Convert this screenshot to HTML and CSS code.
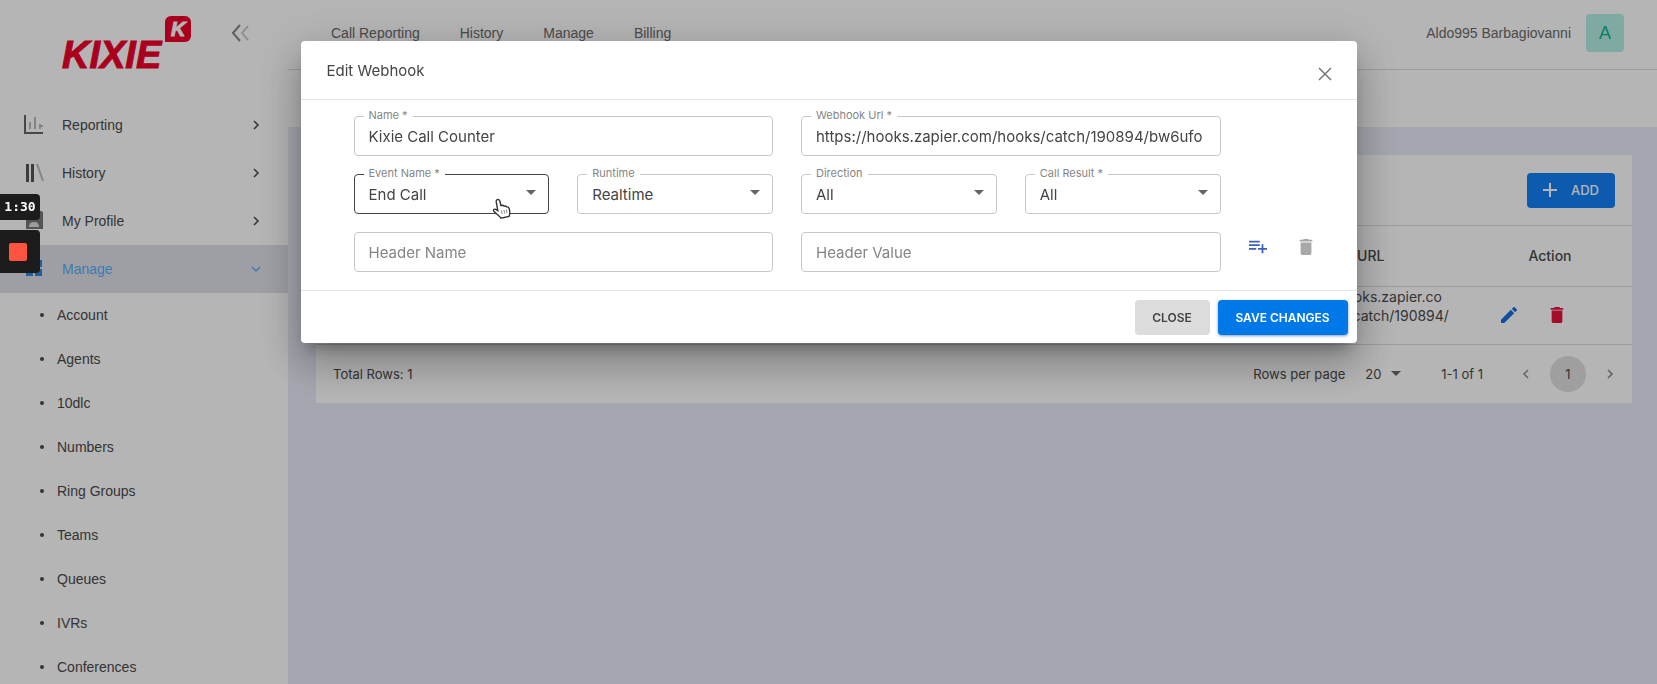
FILE: index.html
```html
<!DOCTYPE html>
<html lang="en">
<head>
  <meta charset="utf-8">
  <title>Kixie - Webhooks</title>
  <link rel="stylesheet" href="styles.css">
</head>
<body>
  <div class="app">
    <aside class="sidebar">
      <div class="brand">
        <a href="#" class="logo"><span class="logo-text">KIXIE</span><span class="logo-badge">K</span></a>
        <button class="icon-btn collapse" aria-label="Collapse menu">
          <svg width="18" height="18" viewBox="0 0 18 18" fill="none" stroke="#888" stroke-width="2"><path d="M8 1L1 9l7 8"/><path d="M16 2l-6 7 6 7" stroke="#ccc"/></svg>
        </button>
      </div>
      <nav>
        <a href="#" class="menu-item">
          <svg class="menu-icon" viewBox="0 0 20 20" fill="none"><path d="M1 0v18h18" stroke="#666" stroke-width="2"/><path d="M6 7v7M11 2v12M16 9v5" stroke="#bbb" stroke-width="2"/><path d="M15 11h4" stroke="#bbb" stroke-width="2"/></svg>
          <span>Reporting</span>
          <svg class="chevron" viewBox="0 0 10 10"><path d="M3 1l4 4-4 4"/></svg>
        </a>
        <a href="#" class="menu-item">
          <svg class="menu-icon" viewBox="0 0 20 20" fill="none"><path d="M3.500 1v18M8.500 1v18" stroke="#555" stroke-width="3"/><path d="M13 1l6 17" stroke="#bbb" stroke-width="2"/></svg>
          <span>History</span>
          <svg class="chevron" viewBox="0 0 10 10"><path d="M3 1l4 4-4 4"/></svg>
        </a>
        <a href="#" class="menu-item">
          <svg class="menu-icon" viewBox="0 0 20 20"><path d="M2 0h15a2 2 0 0 1 2 2v16H2z" fill="#777"/><path d="M5 16q0-5 5-5t5 5z" fill="#ddd"/></svg>
          <span>My Profile</span>
          <svg class="chevron" viewBox="0 0 10 10"><path d="M3 1l4 4-4 4"/></svg>
        </a>
        <a href="#" class="menu-item active">
          <svg class="menu-icon" viewBox="0 0 20 20"><path d="M2 1h7v7H2zM11 1h7v7h-7zM2 10h7v7H2zM11 10h7v7h-7z" fill="#2f86de"/></svg>
          <span>Manage</span>
          <svg class="chevron" viewBox="0 0 10 10"><path d="M1 3l4 4 4-4"/></svg>
        </a>
        <ul class="submenu">
          <li><a href="#">Account</a></li>
          <li><a href="#">Agents</a></li>
          <li><a href="#">10dlc</a></li>
          <li><a href="#">Numbers</a></li>
          <li><a href="#">Ring Groups</a></li>
          <li><a href="#">Teams</a></li>
          <li><a href="#">Queues</a></li>
          <li><a href="#">IVRs</a></li>
          <li><a href="#">Conferences</a></li>
        </ul>
      </nav>
    </aside>

    <div class="main">
      <header class="topbar">
        <nav class="top-links">
          <a href="#">Call Reporting</a>
          <a href="#">History</a>
          <a href="#">Manage</a>
          <a href="#">Billing</a>
        </nav>
        <div class="user"><span>Aldo995 Barbagiovanni</span><span class="avatar">A</span></div>
      </header>
      <div class="subbar"></div>

      <section class="card">
        <div class="card-toolbar">
          <button class="btn btn-add">
            <svg width="14" height="14" viewBox="0 0 14 14" fill="none" stroke="#fff" stroke-width="2"><path d="M7 0v14M0 7h14"/></svg>
            ADD
          </button>
        </div>
        <table class="hooks">
          <thead>
            <tr><th></th><th class="col-url">Webhook URL</th><th class="col-action">Action</th></tr>
          </thead>
          <tbody>
            <tr>
              <td></td>
              <td class="col-url">https://hooks.zapier.co<br>m/hooks/catch/190894/<br>bw6ufo/</td>
              <td class="col-action">
                <div class="row-actions">
                  <button class="icon-btn" aria-label="Edit">
                    <svg width="16" height="16" viewBox="3 3 18 18" fill="#1a6fe0"><path d="M3 17.250V21h3.750L17.810 9.940l-3.750-3.750L3 17.250zM20.710 7.040a1 1 0 0 0 0-1.410l-2.340-2.340a1 1 0 0 0-1.410 0l-1.830 1.830 3.750 3.750 1.830-1.830z"/></svg>
                  </button>
                  <button class="icon-btn" aria-label="Delete">
                    <svg width="16" height="16" viewBox="3 3 18 18" fill="#e8103c"><path d="M6 19c0 1.100.9 2 2 2h8c1.100 0 2-.9 2-2V7H6v12zM19 4h-3.500l-1-1h-5l-1 1H5v2h14V4z"/></svg>
                  </button>
                </div>
              </td>
            </tr>
          </tbody>
        </table>
        <div class="card-footer">
          <span>Total Rows: 1</span>
          <div class="pager">
            <label for="rows">Rows per page</label>
            <div class="rows-select">
              <select id="rows"><option>20</option></select>
              <svg class="caret" viewBox="0 0 10 5"><path d="M0 0h10L5 5z"/></svg>
            </div>
            <span class="range">1-1 of 1</span>
            <button class="icon-btn page-arrow" aria-label="Previous page"><svg class="chevron" viewBox="0 0 10 10"><path d="M7 1L3 5l4 4"/></svg></button>
            <button class="page-num">1</button>
            <button class="icon-btn page-arrow" aria-label="Next page"><svg class="chevron" viewBox="0 0 10 10"><path d="M3 1l4 4-4 4"/></svg></button>
          </div>
        </div>
      </section>
    </div>
  </div>

  <div class="backdrop">
    <form class="modal" role="dialog" aria-labelledby="modalTitle">
      <div class="modal-header">
        <h2 id="modalTitle">Edit Webhook</h2>
        <button type="button" class="icon-btn modal-x" aria-label="Close">
          <svg width="14" height="14" viewBox="0 0 14 14" fill="none" stroke="#777" stroke-width="1.500"><path d="M1 1l12 12M13 1L1 13"/></svg>
        </button>
      </div>
      <div class="modal-body">
        <div class="field wide">
          <input type="text" id="hookName" value="Kixie Call Counter">
          <label for="hookName">Name *</label>
        </div>
        <div class="field wide">
          <input type="text" id="hookUrl" value="https://hooks.zapier.com/hooks/catch/190894/bw6ufo">
          <label for="hookUrl">Webhook Url *</label>
        </div>
        <div class="field hover new-row">
          <select id="eventName"><option>End Call</option></select>
          <label for="eventName">Event Name *</label>
          <svg class="caret" viewBox="0 0 10 5"><path d="M0 0h10L5 5z"/></svg>
          <svg class="pointer" viewBox="0 0 20 22"><path d="M6 1.500c1.200 0 1.800.8 2 2l.8 4 1.400-.3c1 0 1.500.4 1.900.9 1.300-.4 2 .1 2.500.8 1.600-.3 2.300.5 2.600 1.700l.6 3.400c.3 1.800-.2 3-.8 4.500l-8 1.700c-1.200-2-2.800-3-4.500-4.500l-2.700-2.500c-1-1.200.4-2.500 2-1.800l2 1.200L4.200 3.600c-.2-1.200.6-2.100 1.800-2.100z" fill="#fff" stroke="#333" stroke-width="1.400"/><path d="M9.500 12.500l.6 3.500M12 12l.6 3.500M14.300 11.500l.6 3.500" stroke="#888"/></svg>
        </div>
        <div class="field">
          <select id="runtime"><option>Realtime</option></select>
          <label for="runtime">Runtime</label>
          <svg class="caret" viewBox="0 0 10 5"><path d="M0 0h10L5 5z"/></svg>
        </div>
        <div class="field">
          <select id="direction"><option>All</option></select>
          <label for="direction">Direction</label>
          <svg class="caret" viewBox="0 0 10 5"><path d="M0 0h10L5 5z"/></svg>
        </div>
        <div class="field">
          <select id="callResult"><option>All</option></select>
          <label for="callResult">Call Result *</label>
          <svg class="caret" viewBox="0 0 10 5"><path d="M0 0h10L5 5z"/></svg>
        </div>
        <div class="field wide new-row">
          <input type="text" placeholder="Header Name" aria-label="Header Name">
        </div>
        <div class="field wide">
          <input type="text" placeholder="Header Value" aria-label="Header Value">
        </div>
        <div class="header-actions">
          <button type="button" class="icon-btn" aria-label="Add header">
            <svg width="18" height="18" viewBox="2 3 20 20" fill="#3a62b8"><path d="M14 10H2v2h12v-2zm0-4H2v2h12V6zm4 8v-4h-2v4h-4v2h4v4h2v-4h4v-2h-4zM2 16h8v-2H2v2z"/></svg>
          </button>
          <button type="button" class="icon-btn" aria-label="Remove header">
            <svg width="18" height="18" viewBox="2 2 20 20" fill="#a8a8a8"><path d="M6 19c0 1.100.9 2 2 2h8c1.100 0 2-.9 2-2V7H6v12zM19 4h-3.500l-1-1h-5l-1 1H5v2h14V4z"/></svg>
          </button>
        </div>
      </div>
      <div class="modal-footer">
        <button type="button" class="btn btn-close">CLOSE</button>
        <button type="button" class="btn btn-save">SAVE CHANGES</button>
      </div>
    </form>
  </div>

  <!-- screen recorder -->
  <div class="recorder">
    <div class="rec-time">1:30</div>
    <button class="rec-stop" aria-label="Stop recording"><span></span></button>
  </div>
</body>
</html>
```
FILE: styles.css
```css
:root {
    --line: #dcdcdc;
    --text: #4a4a4a;
    --blue: #0078e7;
    --ui: Inter, "Open Sans", sans-serif;
}

* { box-sizing: border-box; }

body {
    margin: 0;
    font-family: "Liberation Sans", Arial, sans-serif;
    font-size: 14px;
    color: var(--text);
    background: #e9ecf8;
}

a { color: inherit; text-decoration: none; }

button, input, select { font-family: var(--ui); color: inherit; }

.app {
    display: flex;
    height: 100vh;
    overflow: hidden;
}

/* sidebar */
.sidebar {
    width: 288px;
    flex-shrink: 0;
    background: #fff;
}

.brand {
    display: flex;
    justify-content: space-between;
    align-items: flex-start;
    height: 101px;
    padding: 16px 38px 0 62px;
}

.logo {
    display: flex;
    font-weight: bold;
    font-style: italic;
    color: #f0002a;
}

.logo-text {
    font-size: 38px;
    line-height: 38px;
    padding-top: 20px;
    -webkit-text-stroke: 1px #f0002a;
}

.logo-badge {
    width: 26px;
    height: 26px;
    margin-left: 4px;
    border-radius: 6px 6px 6px 0;
    background: #f0002a;
    color: #fff;
    font-size: 20px;
    line-height: 26px;
    text-align: center;
    -webkit-text-stroke: 1px #fff;
}

.icon-btn {
    display: flex;
    padding: 0;
    border: none;
    background: none;
    cursor: pointer;
}

.collapse { margin-top: 8px; }

.menu-item {
    display: flex;
    align-items: center;
    height: 48px;
    padding: 0 27px 0 24px;
}

.menu-item span { flex-grow: 1; }

.menu-item.active {
    color: #55acff;
    background: #dfe1e7;
}

.menu-icon {
    width: 20px;
    height: 20px;
    margin-right: 18px;
}

.chevron {
    width: 10px;
    height: 10px;
    fill: none;
    stroke: currentColor;
    stroke-width: 1.5;
}

.submenu {
    margin: 0;
    padding: 0;
    list-style: none;
}

.submenu a {
    display: flex;
    align-items: center;
    height: 44px;
    padding-left: 40px;
}

.submenu a::before {
    content: "";
    width: 4px;
    height: 4px;
    margin-right: 13px;
    border-radius: 50%;
    background: var(--text);
}

/* main area */
.main {
    flex-grow: 1;
    min-width: 0;
}

.topbar {
    display: flex;
    justify-content: space-between;
    align-items: center;
    height: 70px;
    padding: 0 33px 4px 43px;
    background: #fff;
    border-bottom: 1px solid var(--line);
}

.top-links { display: flex; gap: 40px; }

.top-links, .user { color: #6a6a6a; }

.user {
    display: flex;
    align-items: center;
    gap: 15px;
}

.avatar {
    width: 38px;
    line-height: 38px;
    border-radius: 4px;
    background: #b4f0e6;
    color: #10b090;
    font-size: 18px;
    text-align: center;
}

.subbar {
    height: 57px;
    background: #fff;
}

.card {
    margin: 28px 25px 0 28px;
    background: #fff;
    font-family: var(--ui);
}

.card-toolbar {
    display: flex;
    justify-content: flex-end;
    align-items: center;
    height: 71px;
    padding-right: 17px;
    border-bottom: 1px solid var(--line);
}

.btn {
    display: flex;
    align-items: center;
    justify-content: center;
    height: 35px;
    border: none;
    border-radius: 4px;
    font-size: 12px;
    font-weight: 600;
    cursor: pointer;
}

.btn-add {
    gap: 14px;
    width: 88px;
    background: #1280f6;
    color: #fff;
    font-size: 13px;
    font-weight: 500;
}

.hooks {
    width: 100%;
    table-layout: fixed;
    border-collapse: collapse;
    text-align: left;
}

.hooks th, .hooks td {
    padding: 0 0 0 16px;
    border-bottom: 1px solid var(--line);
    line-height: 19px;
}

.hooks th {
    height: 60px;
    font-weight: 500;
}

.hooks .col-url { width: 194px; }

.hooks .col-action {
    width: 164px;
    padding: 0;
    text-align: center;
}

.row-actions {
    display: flex;
    justify-content: center;
    gap: 32px;
    padding-right: 34px;
}

.card-footer {
    display: flex;
    justify-content: space-between;
    align-items: center;
    height: 58px;
    padding: 0 17px;
    font-size: 13px;
}

.pager { display: flex; align-items: center; }

.rows-select {
    position: relative;
    margin: 0 40px 0 20px;
}

.rows-select select {
    width: 36px;
    padding: 0;
    border: none;
    background: none;
    appearance: none;
    font-size: 13px;
}

.caret {
    position: absolute;
    right: 13px;
    top: 16px;
    width: 10px;
    height: 5px;
    fill: #666;
    pointer-events: none;
}

.rows-select .caret { right: 0; top: 5px; }

.range { margin-right: 38px; }

.page-arrow { color: #888; }

.page-num {
    width: 36px;
    height: 36px;
    margin: 0 19px;
    border: none;
    border-radius: 50%;
    background: #e0e0e0;
    font-size: 13px;
}

/* modal */
.backdrop {
    position: fixed;
    inset: 0;
    padding: 41px 32px;
    background: rgba(0, 0, 0, .29);
}

.modal {
    max-width: 1056px;
    margin: 0 auto;
    border-radius: 4px;
    background: #fff;
    color: #444;
    font-family: var(--ui);
    box-shadow: 0 11px 15px -7px rgba(0, 0, 0, .3), 0 24px 38px 3px rgba(0, 0, 0, .16), 0 9px 46px 8px rgba(0, 0, 0, .14);
}

.modal-header {
    display: flex;
    justify-content: space-between;
    align-items: center;
    height: 59px;
    padding: 0 25px 0 26px;
    border-bottom: 1px solid #e4e4e4;
}

.modal-header h2 {
    margin: 0;
    font-size: 15px;
    font-weight: 400;
}

.modal-x { padding-top: 8px; }

.modal-body {
    display: grid;
    grid-template-columns: repeat(4, 1fr) 66px;
    gap: 18px 28px;
    padding: 16px 42px 18px 53px;
}

.wide { grid-column: span 2; }

.field { position: relative; }

.new-row { grid-column-start: 1; }

.new-row.wide { grid-column: 1 / span 2; }

.field input, .field select {
    display: block;
    width: 100%;
    height: 40px;
    padding: 0 14px;
    border: 1px solid #c8c8c8;
    border-radius: 4px;
    background: #fff;
    appearance: none;
    font-size: 15px;
}

.field.hover select { border-color: #444; }

.field input::placeholder { color: #858585; opacity: 1; }

.field label {
    position: absolute;
    left: 10px;
    top: -8px;
    padding: 0 5px;
    background: #fff;
    color: #858585;
    font-size: 11px;
    line-height: 14px;
}

.pointer {
    position: absolute;
    right: 37px;
    bottom: -6px;
    width: 20px;
    height: 22px;
    fill: none;
}

.header-actions {
    display: flex;
    align-self: center;
    justify-content: space-between;
    padding-bottom: 10px;
}

.modal-footer {
    display: flex;
    justify-content: flex-end;
    align-items: center;
    gap: 8px;
    height: 53px;
    padding-right: 9px;
    border-top: 1px solid #e4e4e4;
}

.btn-close { width: 75px; background: #dcdcdc; }

.btn-save {
    width: 130px;
    background: var(--blue);
    color: #fff;
    box-shadow: 0 1px 3px rgba(0, 60, 140, .5);
}

/* recorder widget */
.recorder {
    position: fixed;
    left: 0;
    top: 194px;
    width: 40px;
}

.rec-time {
    height: 26px;
    margin-bottom: 10px;
    border-radius: 0 4px 4px 0;
    background: #1c1c1c;
    color: #fff;
    font: bold 13px/26px "DejaVu Sans Mono", monospace;
    text-align: center;
}

.rec-stop {
    display: flex;
    align-items: center;
    width: 40px;
    height: 43px;
    padding: 0 9px;
    border: none;
    border-radius: 0 4px 4px 0;
    background: #1c1c1c;
}

.rec-stop span {
    width: 18px;
    height: 18px;
    border-radius: 2px;
    background: #ff5440;
}
```
